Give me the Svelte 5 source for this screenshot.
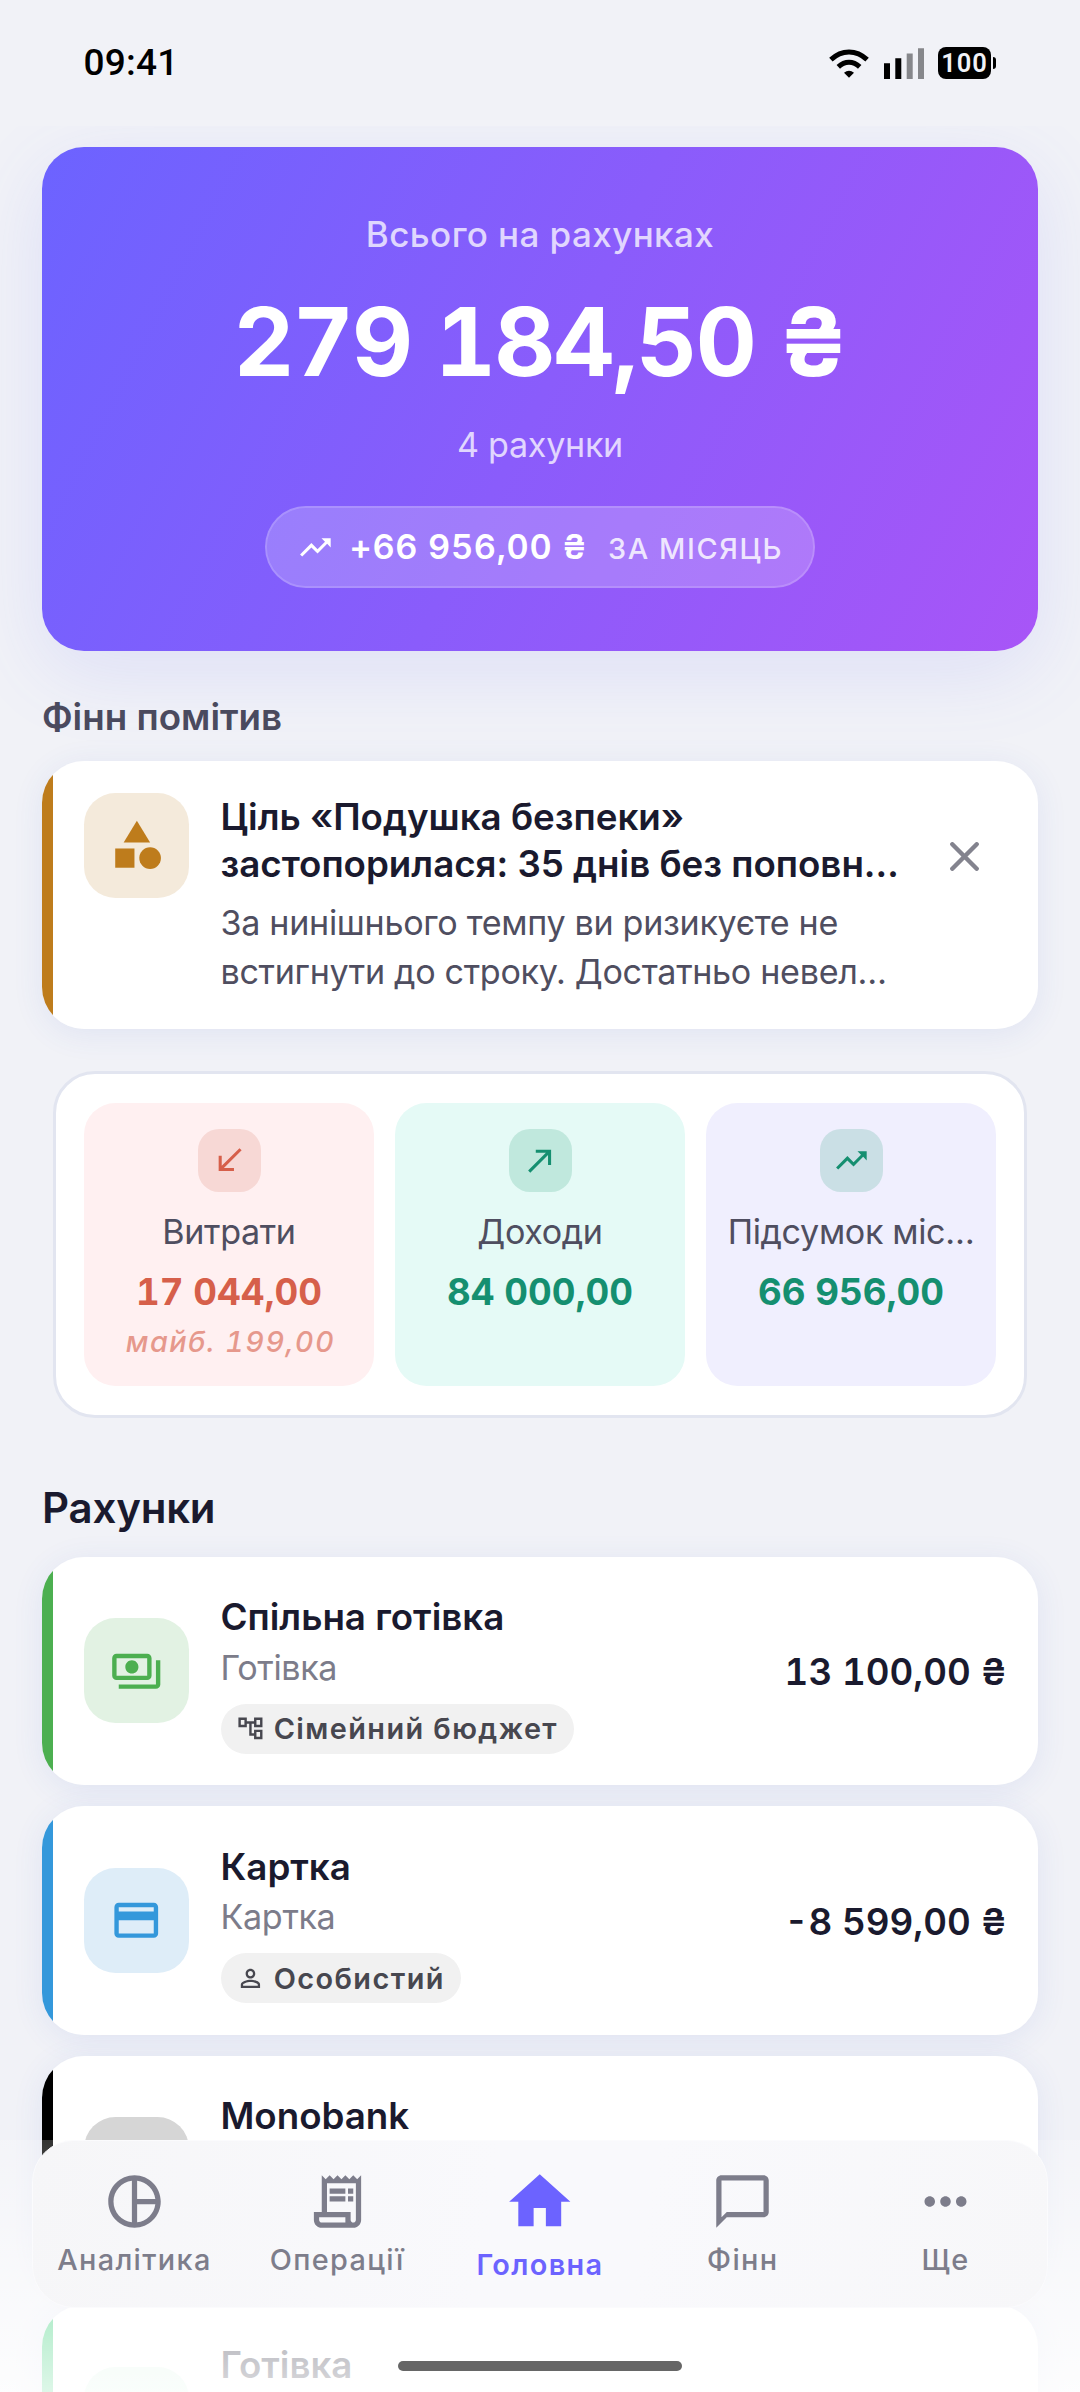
<script>
  const trend = 'M16 6l2.29 2.29-4.88 4.88-4-4L2 16.59 3.41 18l6-6 4 4 6.3-6.29L22 12V6z';

  const tiles = [
    { kind: 'out', label: 'Витрати', value: '17 044,00', note: 'майб. 199,00', icon: 'M15 19v-2H8.41L20 5.41 18.59 4 7 15.59V9H5v10h10z' },
    { kind: 'in', label: 'Доходи', value: '84 000,00', icon: 'M9 5v2h6.59L4 18.59 5.41 20 17 8.41V15h2V5z' },
    { kind: 'sum', label: 'Підсумок міс…', value: '66 956,00', icon: trend },
  ];

  const accounts = [
    {
      kind: 'family', name: 'Спільна готівка', type: 'Готівка', tag: 'Сімейний бюджет', amount: '13 100,00 ₴',
      icon: 'M19 14V6c0-1.1-.9-2-2-2H3c-1.1 0-2 .9-2 2v8c0 1.1.9 2 2 2h14c1.1 0 2-.9 2-2zm-2 0H3V6h14v8zm-7-7c-1.66 0-3 1.34-3 3s1.34 3 3 3 3-1.34 3-3-1.34-3-3-3zm13 0v11c0 1.1-.9 2-2 2H4v-2h17V7h2z',
      tagIcon: 'M22 11V3h-7v3H9V3H2v8h7V8h2v10h4v3h7v-8h-7v3h-2V8h2v3h7zM7 9H4V5h3v4zm10 6h3v4h-3v-4zm0-10h3v4h-3V5z',
    },
    {
      kind: 'debit', name: 'Картка', type: 'Картка', tag: 'Особистий', amount: '-8 599,00 ₴',
      icon: 'M20 4H4c-1.11 0-1.99.89-1.99 2L2 18c0 1.11.89 2 2 2h16c1.11 0 2-.89 2-2V6c0-1.11-.89-2-2-2zm0 14H4v-6h16v6zm0-10H4V6h16v2z',
      tagIcon: 'M12 5.9c1.16 0 2.1.94 2.1 2.1s-.94 2.1-2.1 2.1S9.9 9.16 9.9 8s.94-2.1 2.1-2.1m0 9c2.97 0 6.1 1.46 6.1 2.1v1.1H5.9V17c0-.64 3.13-2.1 6.1-2.1M12 4C9.79 4 8 5.79 8 8s1.79 4 4 4 4-1.79 4-4-1.79-4-4-4zm0 9c-2.67 0-8 1.34-8 4v3h16v-3c0-2.66-5.33-4-8-4z',
    },
    { kind: 'mono', name: 'Monobank' },
    { kind: 'cash', name: 'Готівка' },
  ];

  const tabs = [
    { label: 'Аналітика', icon: 'M12 2C6.48 2 2 6.48 2 12s4.48 10 10 10 10-4.48 10-10S17.52 2 12 2zm1 2.07c3.61.45 6.48 3.33 6.93 6.93H13V4.07zM4 12c0-4.06 3.07-7.44 7-7.93v15.87c-3.93-.5-7-3.88-7-7.94zm9 7.93V13h6.93c-.45 3.61-3.32 6.48-6.93 6.93z' },
    { label: 'Операції', icon: 'M19.5 3.5L18 2l-1.5 1.5L15 2l-1.5 1.5L12 2l-1.5 1.5L9 2 7.5 3.5 6 2v14H3v3c0 1.66 1.34 3 3 3h12c1.66 0 3-1.34 3-3V2l-1.5 1.5zM15 20H6c-.55 0-1-.45-1-1v-1h10v2zm4-1c0 .55-.45 1-1 1s-1-.45-1-1v-3H8V5h11v14zM9 7h6v2H9zM16 7h2v2h-2zM9 10h6v2H9zM16 10h2v2h-2z' },
    { label: 'Головна', active: true, icon: 'M10 20v-6h4v6h5v-8h3L12 3 2 12h3v8z' },
    { label: 'Фінн', icon: 'M20 2H4c-1.1 0-2 .9-2 2v18l4-4h14c1.1 0 2-.9 2-2V4c0-1.1-.9-2-2-2zm0 14H6l-2 2V4h16v12z' },
    { label: 'Ще', icon: 'M6 10c-1.1 0-2 .9-2 2s.9 2 2 2 2-.9 2-2-.9-2-2-2zm12 0c-1.1 0-2 .9-2 2s.9 2 2 2 2-.9 2-2-.9-2-2-2zm-6 0c-1.1 0-2 .9-2 2s.9 2 2 2 2-.9 2-2-.9-2-2-2z' },
  ];
</script>

<div class="screen">
  <header class="status">
    <span class="time">09:41</span>
    <div class="indicators">
      <svg class="wifi" viewBox="0 0 40 29">
        <g fill="none" stroke="#000" stroke-width="5">
          <path d="M1.9 10.6Q10 2.9 20 2.9T38.1 10.6" />
          <path d="M9.3 17.9Q14.2 13.3 20 13.3T30.7 17.9" />
        </g>
        <path d="M15 23.8Q20 19.6 25 23.8L20 28.8z" />
      </svg>
      <svg class="signal" viewBox="0 0 40 31">
        <path d="M0 15.3h6V31H0zM11.3 10.3h6V31h-6z" />
        <path class="weak" d="M22.7 5.5h6V31h-6zM34 .3h6V31h-6z" />
      </svg>
      <div class="battery"><span>100</span></div>
      <i class="nub"></i>
    </div>
  </header>

  <section class="hero">
    <p class="hero-label">Всього на рахунках</p>
    <p class="hero-total">279 184,50 ₴</p>
    <p class="hero-count">4 рахунки</p>
    <div class="hero-pill">
      <svg viewBox="0 0 24 24"><path d={trend} /></svg>
      <b>+66 956,00 ₴</b>
      <span>ЗА МІСЯЦЬ</span>
    </div>
  </section>

  <h2 class="small-title">Фінн помітив</h2>
  <article class="card insight">
    <div class="badge">
      <svg viewBox="0 0 24 24"><path d="M12 2l-5.5 9h11z" /><circle cx="17.5" cy="17.5" r="4.5" /><path d="M3 13.5h8v8H3z" /></svg>
    </div>
    <div class="insight-text">
      <h3>Ціль «Подушка безпеки»<br />застопорилася: 35 днів без поповн…</h3>
      <p>За нинішнього темпу ви ризикуєте не<br />встигнути до строку. Достатньо невел…</p>
    </div>
    <svg class="close" viewBox="0 0 29 29"><path d="M2.3 2.3l24.4 24.4M26.7 2.3L2.3 26.7" /></svg>
  </article>

  <section class="summary">
    {#each tiles as tile}
      <div class="tile {tile.kind}">
        <div class="tile-icon"><svg viewBox="0 0 24 24"><path d={tile.icon} /></svg></div>
        <p class="tile-label">{tile.label}</p>
        <p class="tile-value">{tile.value}</p>
        {#if tile.note}<p class="tile-note">{tile.note}</p>{/if}
      </div>
    {/each}
  </section>

  <h2 class="title">Рахунки</h2>
  <div class="accounts">
    {#each accounts as account}
      <article class="card account {account.kind}">
        <div class="badge">
          {#if account.icon}<svg viewBox="0 0 24 24"><path d={account.icon} /></svg>{/if}
        </div>
        <div class="account-text">
          <h3>{account.name}</h3>
          {#if account.type}<p>{account.type}</p>{/if}
          {#if account.tag}
            <div class="chip">
              <svg viewBox="0 0 24 24"><path d={account.tagIcon} /></svg>
              <span>{account.tag}</span>
            </div>
          {/if}
        </div>
        {#if account.amount}<span class="amount">{account.amount}</span>{/if}
      </article>
    {/each}
  </div>

  <div class="dock">
    <nav>
      {#each tabs as tab}
        <div class="tab" class:active={tab.active}>
          <svg viewBox="0 0 24 24"><path d={tab.icon} /></svg>
          <span>{tab.label}</span>
        </div>
      {/each}
    </nav>
    <div class="home-bar"></div>
  </div>
</div>

<style>
  :global(body) { margin: 0; }
  .screen {
    position: relative;
    display: flex;
    flex-direction: column;
    width: 1080px;
    height: 2392px;
    overflow: hidden;
    background: #f1f2f7;
    color: #1a1a2e;
    font-family: Inter, 'Noto Sans', sans-serif;
  }
  h2, h3, p { margin: 0; font-weight: 400; }
  svg { display: block; fill: currentColor; flex: none; }

  .status {
    position: relative;
    z-index: 1;
    display: flex;
    align-items: center;
    justify-content: space-between;
    flex: none;
    height: 126px;
    box-sizing: border-box;
    padding: 0 84px 0 83.5px;
    background: #f1f2f7;
    color: #000;
    font-family: Roboto, sans-serif;
  }
  .time { padding-bottom: 1px; font-size: 37px; font-weight: 500; letter-spacing: 0.2px; }
  .indicators { display: flex; align-items: center; }
  .wifi { width: 40px; height: 29px; margin-right: 15px; }
  .signal { width: 40px; height: 31px; margin-right: 14px; }
  .weak { fill: #86878b; }
  .battery {
    width: 53px;
    height: 32px;
    border-radius: 8px;
    background: #000;
    color: #f1f2f7;
    font-size: 25.5px;
    font-weight: 600;
    line-height: 32px;
    text-align: center;
    letter-spacing: 1px;
  }
  .nub { width: 3px; height: 12px; margin-left: 2px; border-radius: 0 3px 3px 0; background: #000; }

  .hero {
    display: flex;
    flex-direction: column;
    align-items: center;
    flex: none;
    height: 504px;
    box-sizing: border-box;
    margin: 21px 42px 0;
    padding-top: 63px;
    border-radius: 42px;
    background: linear-gradient(116.84deg, #6c63ff, #a855f7);
    box-shadow: 0 21px 80px rgba(90, 100, 250, 0.13);
    color: #fff;
  }
  .hero-label { font-size: 35px; line-height: 48px; font-weight: 500; letter-spacing: 0.4px; color: rgba(255, 255, 255, 0.75); }
  .hero-total { margin-top: 25px; font-size: 94.5px; line-height: 118px; font-weight: 700; font-variant-numeric: tabular-nums; letter-spacing: -1.8px; white-space: nowrap; }
  .hero-count { margin-top: 21px; font-size: 34.125px; line-height: 46px; letter-spacing: -0.3px; color: rgba(255, 255, 255, 0.75); }
  .hero-pill {
    display: flex;
    align-items: center;
    height: 82px;
    box-sizing: border-box;
    margin-top: 38px;
    padding: 0 30px;
    border: 2px solid rgba(255, 255, 255, 0.32);
    border-radius: 41px;
    background: rgba(255, 255, 255, 0.2);
    background-clip: padding-box;
  }
  .hero-pill svg { width: 36.75px; height: 36.75px; margin-right: 15.75px; }
  .hero-pill b { padding-bottom: 1px; font-size: 34.3px; font-weight: 600; font-variant-numeric: tabular-nums; letter-spacing: 0.68px; white-space: nowrap; }
  .hero-pill span { margin-left: 21px; padding-top: 3px; font-size: 28.875px; font-weight: 500; letter-spacing: 1.6px; color: rgba(255, 255, 255, 0.82); }

  .small-title { flex: none; margin: 42px 42px 0; font-size: 36.75px; line-height: 48px; font-weight: 600; color: #4a4a5e; }

  .card {
    display: flex;
    flex: none;
    box-sizing: border-box;
    border-radius: 42px;
    background: linear-gradient(90deg, var(--tone) 10.5px, #fff 10.5px);
    box-shadow: 0 5px 32px rgba(60, 90, 200, 0.09);
  }
  .badge {
    display: flex;
    align-items: center;
    justify-content: center;
    flex: none;
    width: 105px;
    height: 105px;
    border-radius: 31.5px;
    background: var(--soft);
    color: var(--tone);
  }
  h3 { font-size: 36.75px; font-weight: 600; letter-spacing: -0.03px; white-space: nowrap; }

  .insight {
    --tone: #be7c1c;
    --soft: #f4eadb;
    height: 268px;
    margin: 20px 42px 0;
    padding: 31.5px 59.5px 0 42px;
  }
  .insight .badge svg { width: 57.75px; height: 57.75px; }
  .insight-text { flex: 1; margin-left: 31.5px; }
  .insight h3 { line-height: 47px; }
  .insight p { margin-top: 11.5px; font-size: 34.125px; line-height: 49px; letter-spacing: -0.32px; white-space: nowrap; color: #4f4e60; }
  .close { width: 29px; height: 29px; margin-top: 49px; fill: none; stroke: #83838e; stroke-width: 4.4; stroke-linecap: round; }

  .summary {
    display: grid;
    grid-template-columns: repeat(3, 1fr);
    gap: 21px;
    flex: none;
    height: 347px;
    box-sizing: border-box;
    margin: 42px 53px 0;
    padding: 29px 28px;
    border: 3px solid #e2e5f0;
    border-radius: 42px;
    background: #fff;
  }
  .tile {
    display: flex;
    flex-direction: column;
    align-items: center;
    min-width: 0;
    padding-top: 26px;
    border-radius: 31.5px;
    white-space: nowrap;
  }
  .tile-icon {
    display: flex;
    align-items: center;
    justify-content: center;
    width: 63px;
    height: 63px;
    border-radius: 21px;
  }
  .tile-icon svg { width: 36.75px; height: 36.75px; }
  .tile-label { margin-top: 16.5px; font-size: 34.125px; line-height: 46px; letter-spacing: -0.36px; color: #4f4e60; }
  .tile-value { margin-top: 12.5px; font-size: 36.75px; line-height: 50px; font-weight: 700; font-variant-numeric: tabular-nums; }
  .tile-note { margin-top: 3.5px; padding-left: 3px; font-size: 28.875px; line-height: 42px; font-weight: 500; font-style: italic; font-variant-numeric: tabular-nums; letter-spacing: 1.45px; opacity: 0.6; }
  .out { background: #fff0f1; color: #d65f4a; }
  .out .tile-icon { background: #f7d8d5; }
  .in { background: #e5faf6; color: #158f70; }
  .in .tile-icon { background: #c0e8dd; }
  .sum { background: #f0effe; color: #158f70; }
  .sum .tile-icon { background: #cadfe5; }

  .title { flex: none; margin: 62px 42px 0; font-size: 42px; line-height: 56px; font-weight: 600; letter-spacing: -0.2px; }

  .accounts { display: flex; flex-direction: column; gap: 21px; flex: none; margin: 20.8px 42px 0; }
  .account { align-items: center; height: 228.4px; padding: 0 31.5px 0 42px; }
  .account .badge svg { width: 52.5px; height: 52.5px; }
  .account-text { align-self: flex-start; flex: 1; margin-left: 31.5px; padding-top: 36.5px; }
  .account h3 { line-height: 48px; }
  .account p { margin-top: 3.5px; font-size: 34.125px; line-height: 46px; letter-spacing: -0.35px; color: #7c7c8a; }
  .chip {
    display: inline-flex;
    align-items: center;
    height: 50px;
    box-sizing: border-box;
    margin-top: 13px;
    padding: 0 15.75px;
    border-radius: 25px;
    background: #f1f1f1;
    color: #47474f;
  }
  .chip svg { width: 28.875px; height: 28.875px; margin-right: 8.5px; }
  .chip span { padding-top: 1px; font-size: 28.875px; line-height: 42px; font-weight: 600; letter-spacing: 1.42px; white-space: nowrap; }
  .amount { padding-top: 1.5px; font-size: 36.75px; font-weight: 600; font-variant-numeric: tabular-nums; white-space: nowrap; }
  .family { --tone: #4caf50; --soft: #e2f2e3; }
  .debit { --tone: #3498db; --soft: #deedf8; }
  .mono { --tone: #000; --soft: #d6d6d6; }
  .cash { --tone: #2ecc71; --soft: #dff7e9; }

  .dock {
    position: absolute;
    left: 0;
    right: 0;
    bottom: 0;
    height: 252px;
    background: linear-gradient(rgba(255, 255, 255, 0.2), rgba(255, 255, 255, 0.84));
  }
  nav {
    display: flex;
    align-items: center;
    height: 167.5px;
    box-sizing: border-box;
    margin: 0 32px;
    padding-top: 3px;
    border: 1px solid #fbfbfd;
    border-radius: 42px;
    background: linear-gradient(100deg, #f6f6f8, #f9f9fc 45%, #f9f9fc 60%, #f7f7f9);
    color: #7d7d8b;
  }
  .tab { display: flex; flex-direction: column; align-items: center; flex: 1; }
  .tab svg { width: 63px; height: 63px; }
  .tab span { margin-top: 5.5px; font-size: 28.875px; line-height: 42px; font-weight: 500; letter-spacing: 1.35px; }
  .tab.active { color: #6c63ff; }
  .tab.active svg { width: 73.5px; height: 73.5px; }
  .tab.active span { font-weight: 600; }
  .home-bar { width: 284px; height: 10px; margin: 53.5px auto 0; border-radius: 5px; background: #666; }
</style>
